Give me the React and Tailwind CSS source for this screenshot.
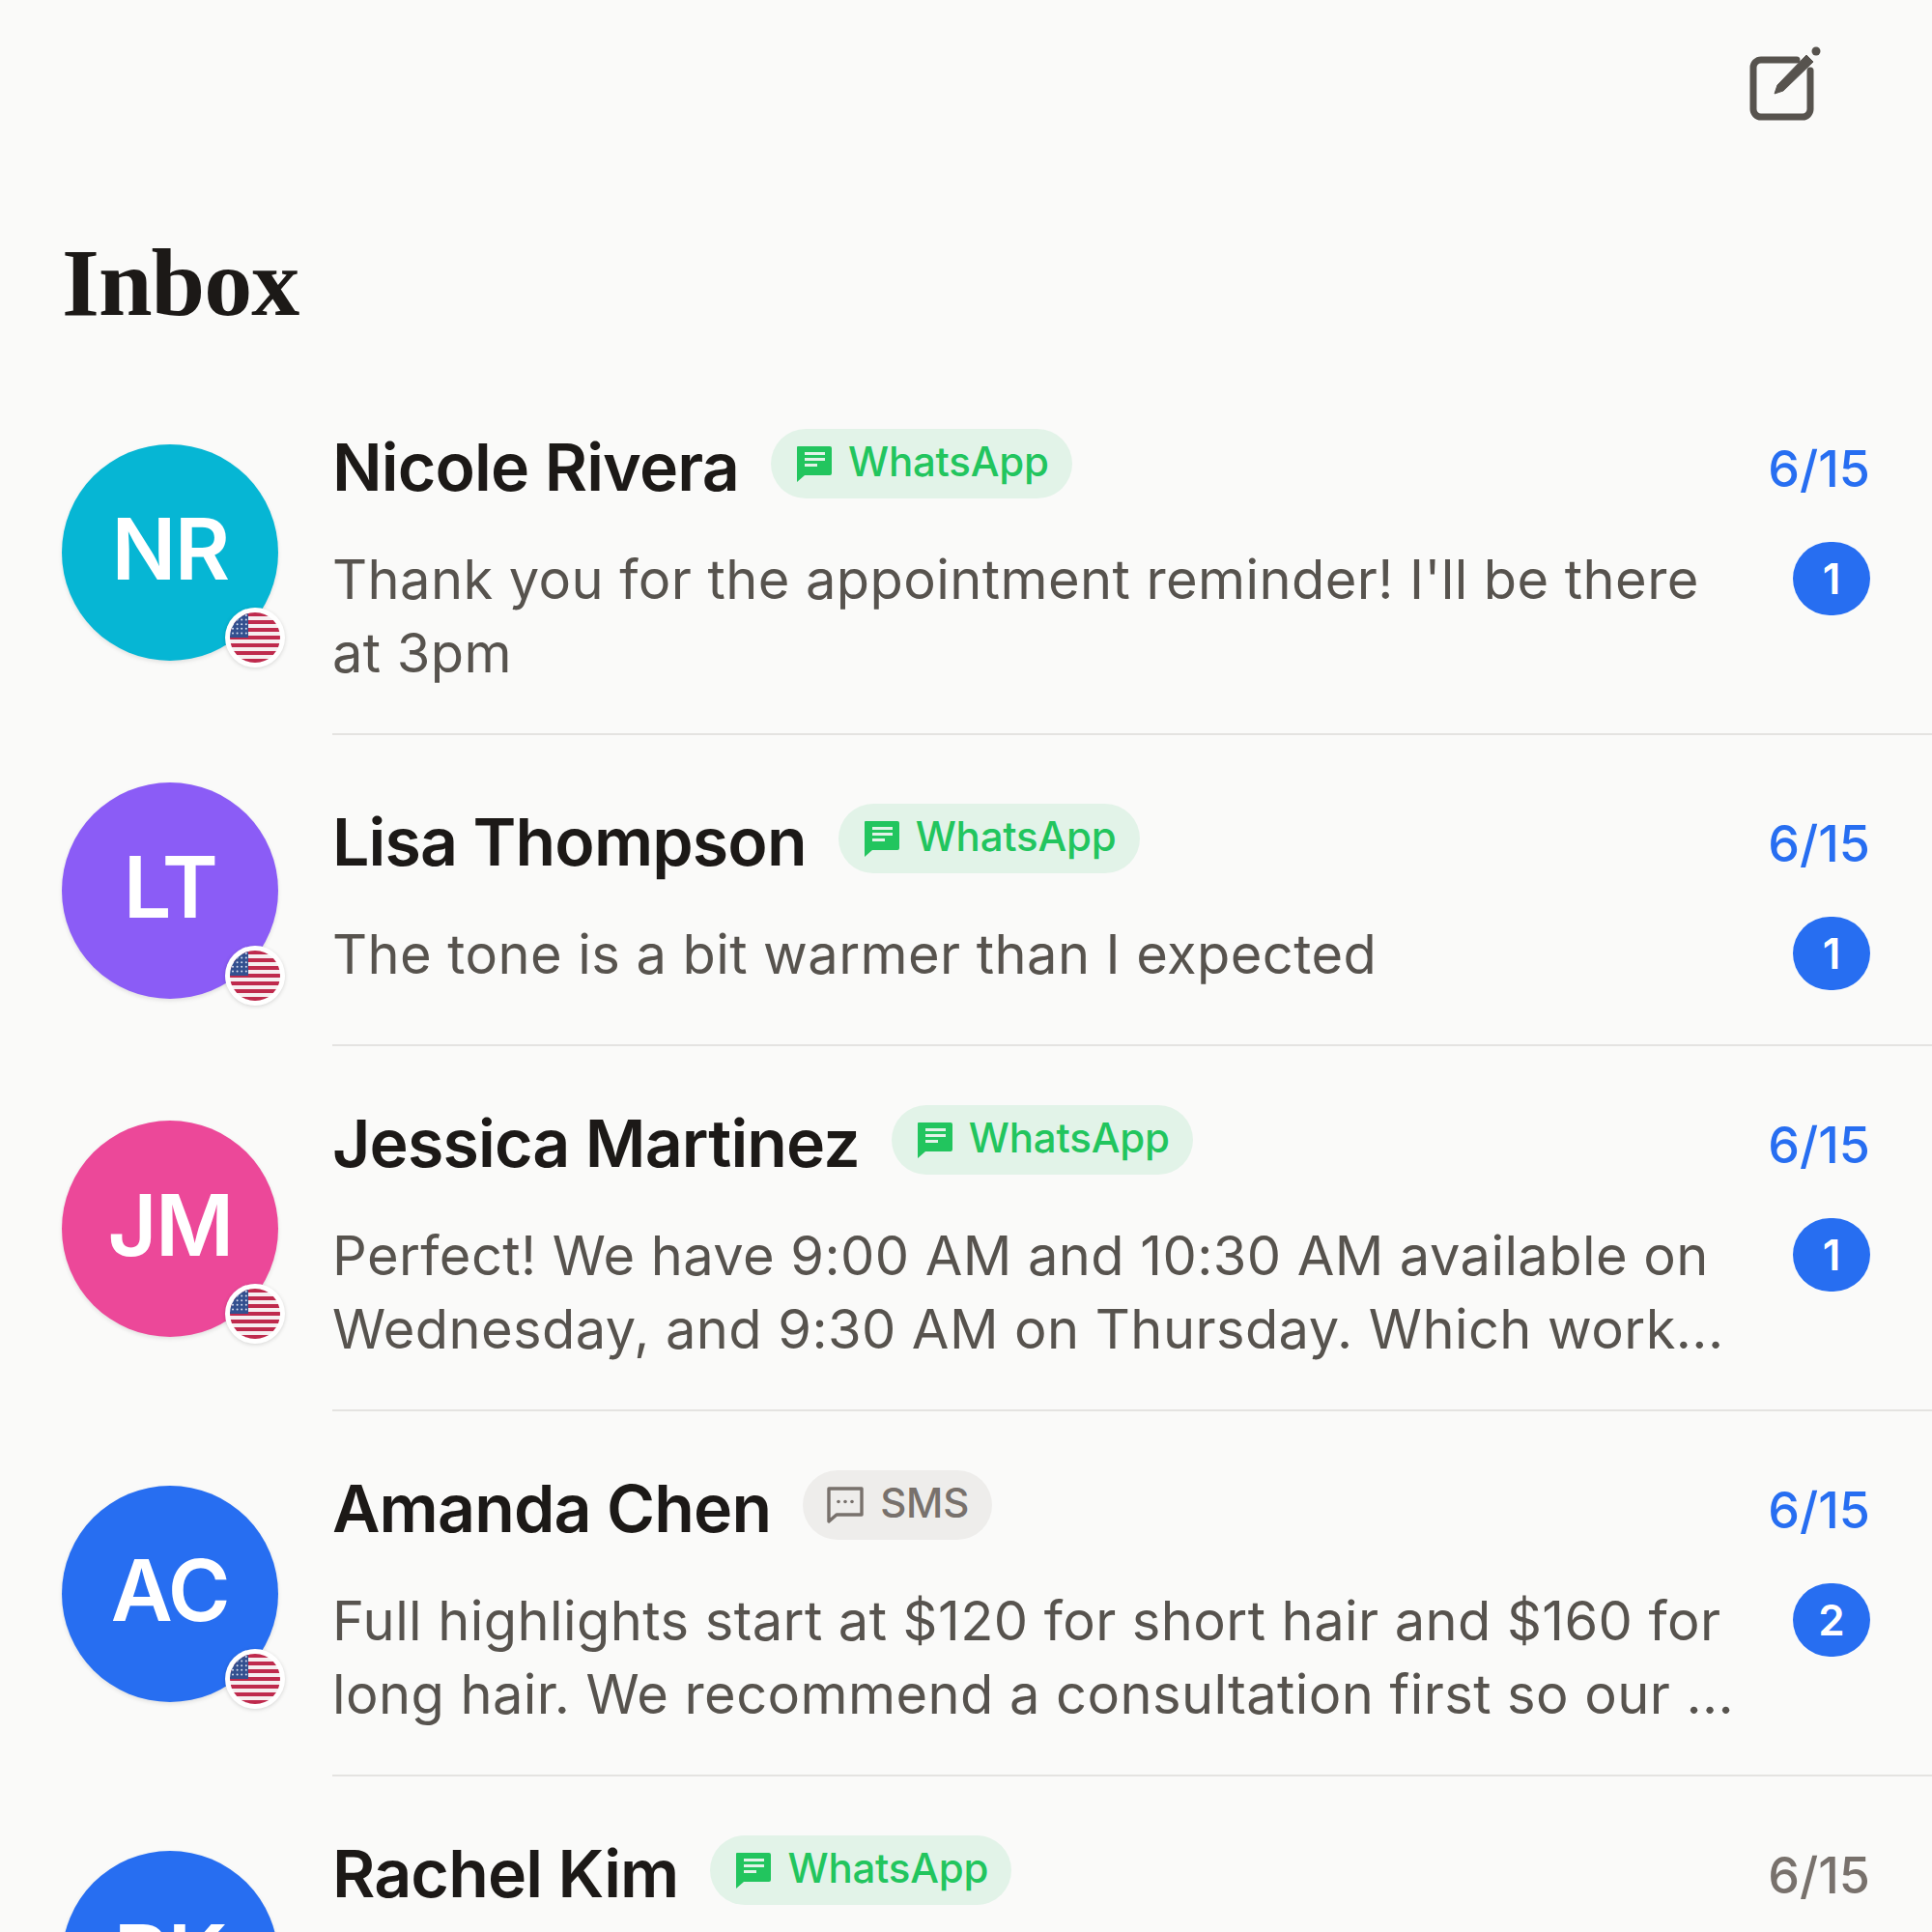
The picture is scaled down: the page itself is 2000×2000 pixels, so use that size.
import React from "react";

function Flag() {
  const stripes = [];
  for (let i = 0; i < 7; i++) {
    stripes.push(<rect key={i} x="0" y={i * 8} width="52" height="4" fill="#bf2a4d" />);
  }
  const stars = [];
  for (let r = 0; r < 5; r++) {
    for (let c = 0; c < 4; c++) {
      stars.push(<circle key={r + "-" + c} cx={3 + c * 4.6} cy={3 + r * 4.6} r="1" fill="#d6def0" />);
    }
  }
  return (
    <svg viewBox="0 0 52 52" className="w-[52px] h-[52px] rounded-full block">
      <rect width="52" height="52" fill="#f6eef0" />
      {stripes}
      <rect x="0" y="0" width="19" height="26" fill="#33508f" />
      {stars}
    </svg>
  );
}

function WhatsAppIcon() {
  return (
    <svg viewBox="0 0 40 40" className="w-[40px] h-[40px] shrink-0" aria-hidden="true">
      <path fill="#22c55e" d="M4 2h33a2 2 0 0 1 2 2v26a2 2 0 0 1-2 2H11l-8 7V3a1 1 0 0 1 1-1z" />
      <rect x="11" y="8" width="21" height="3" fill="#e2f3e8" />
      <rect x="11" y="14" width="21" height="3" fill="#e2f3e8" />
      <rect x="11" y="20" width="13" height="3" fill="#e2f3e8" />
    </svg>
  );
}

function SmsIcon() {
  return (
    <svg viewBox="0 0 40 40" className="w-[40px] h-[40px] shrink-0" aria-hidden="true">
      <path fill="none" stroke="#78716c" strokeWidth="3.400" strokeLinejoin="round" d="M3 3h34v27H11l-8 7z" />
      <circle cx="13" cy="16.500" r="1.800" fill="#78716c" />
      <circle cx="20" cy="16.500" r="1.800" fill="#78716c" />
      <circle cx="27" cy="16.500" r="1.800" fill="#78716c" />
    </svg>
  );
}

function Badge({ type }) {
  if (type === "sms") {
    return (
      <span className="flex items-center gap-4 h-[72px] pl-6 pr-[24px] rounded-full bg-[#eeedeb] text-[#78716c] text-[42px] font-medium leading-none mb-[6px] tracking-[-0.2px]">
        <SmsIcon />
        <span className="pb-[4px]">SMS</span>
      </span>
    );
  }
  return (
    <span className="flex items-center gap-4 h-[72px] pl-6 pr-[24px] rounded-full bg-[#e2f3e8] text-[#22c55e] text-[42px] font-medium leading-none mb-[6px] tracking-[-0.2px]">
      <WhatsAppIcon />
      <span className="pb-[4px]">WhatsApp</span>
    </span>
  );
}

const rows = [
  {
    initials: "NR",
    color: "bg-[#06b6d4]",
    name: "Nicole Rivera",
    type: "wa",
    msg: "Thank you for the appointment reminder! I'll be there at 3pm",
    count: 1,
  },
  {
    initials: "LT",
    color: "bg-[#8b5cf6]",
    name: "Lisa Thompson",
    type: "wa",
    msg: "The tone is a bit warmer than I expected",
    count: 1,
  },
  {
    initials: "JM",
    color: "bg-[#ec4899]",
    name: "Jessica Martinez",
    type: "wa",
    msg: "Perfect! We have 9:00 AM and 10:30 AM available on Wednesday, and 9:30 AM on Thursday. Which work...",
    count: 1,
  },
  {
    initials: "AC",
    color: "bg-[#276ef1]",
    name: "Amanda Chen",
    type: "sms",
    msg: "Full highlights start at $120 for short hair and $160 for long hair. We recommend a consultation first so our ...",
    count: 2,
  },
  {
    initials: "RK",
    color: "bg-[#276ef1]",
    name: "Rachel Kim",
    type: "wa",
    msg: "Thank you so much for fitting me in this week, I really appreciate it and will see you on Friday",
    count: 0,
  },
];

function Row({ r }) {
  const unread = r.count > 0;
  return (
    <div className="flex items-center gap-[56px] pl-16">
      <div className="relative shrink-0 w-[224px] h-[224px]">
        <div className={"w-full h-full rounded-full flex items-center justify-center pb-[8px] text-white text-[88px] font-semibold tracking-[-1.5px] shadow-[0_2px_4px_rgba(0,0,0,0.1)] " + r.color}>
          {r.initials}
        </div>
        <div className="absolute right-[-7px] bottom-[-7px] p-[5px] bg-white rounded-full shadow-[0_1px_4px_rgba(0,0,0,0.15)]">
          <Flag />
        </div>
      </div>
      <div className="flex-1 min-w-0 min-h-[322px] flex flex-col justify-center border-b-2 border-[#e4e3e1] pt-[54px] pb-[45px] pr-16">
        <div className="flex items-center justify-between">
          <div className="flex items-center gap-[33px]">
            <span className="text-[68px] leading-[92px] font-semibold text-[#1c1917] tracking-[-0.85px]">{r.name}</span>
            <Badge type={r.type} />
          </div>
          <span className={"text-[52px] font-medium pt-[6px] " + (unread ? "text-[#276ef1]" : "text-[#78716c]")}>6/15</span>
        </div>
        <div className="flex items-start justify-between gap-[48px] mt-[33px]">
          <p className="text-[56px] leading-[76px] text-[#57534e] tracking-[0.42px] flex-1 min-w-0">{r.msg}</p>
          {unread && (
            <span className="shrink-0 w-[80px] h-[76px] -mt-[1px] rounded-full bg-[#276ef1] text-white text-[44px] font-semibold flex items-center justify-center">
              {r.count}
            </span>
          )}
        </div>
      </div>
    </div>
  );
}

export default function App() {
  return (
    <div className="w-[2000px] h-[2000px] overflow-hidden bg-[#fafaf9] font-['Inter',sans-serif] [font-optical-sizing:none]">
      <div className="flex justify-end pt-[40px] pr-[110px] h-[228px]">
        <svg viewBox="0 0 90 90" className="w-[90px] h-[90px] text-[#57534e]" fill="none">
          <path d="M60 22H23a8 8 0 0 0-8 8v43a8 8 0 0 0 8 8h43a8 8 0 0 0 8-8V33" stroke="currentColor" strokeWidth="7" strokeLinecap="round" />
          <path d="M37 57L40 48L70 17L77 24L46 54Z" fill="currentColor" stroke="currentColor" strokeWidth="1" strokeLinejoin="round" />
          <circle cx="80" cy="13" r="4.500" fill="currentColor" />
        </svg>
      </div>
      <h1 className="pl-16 h-[155px] text-[100px] leading-[130px] font-bold tracking-[-1px] font-['Liberation_Serif',serif] text-[#1c1917]">Inbox</h1>
      <div>
        {rows.map((r) => (
          <Row key={r.initials} r={r} />
        ))}
      </div>
    </div>
  );
}
